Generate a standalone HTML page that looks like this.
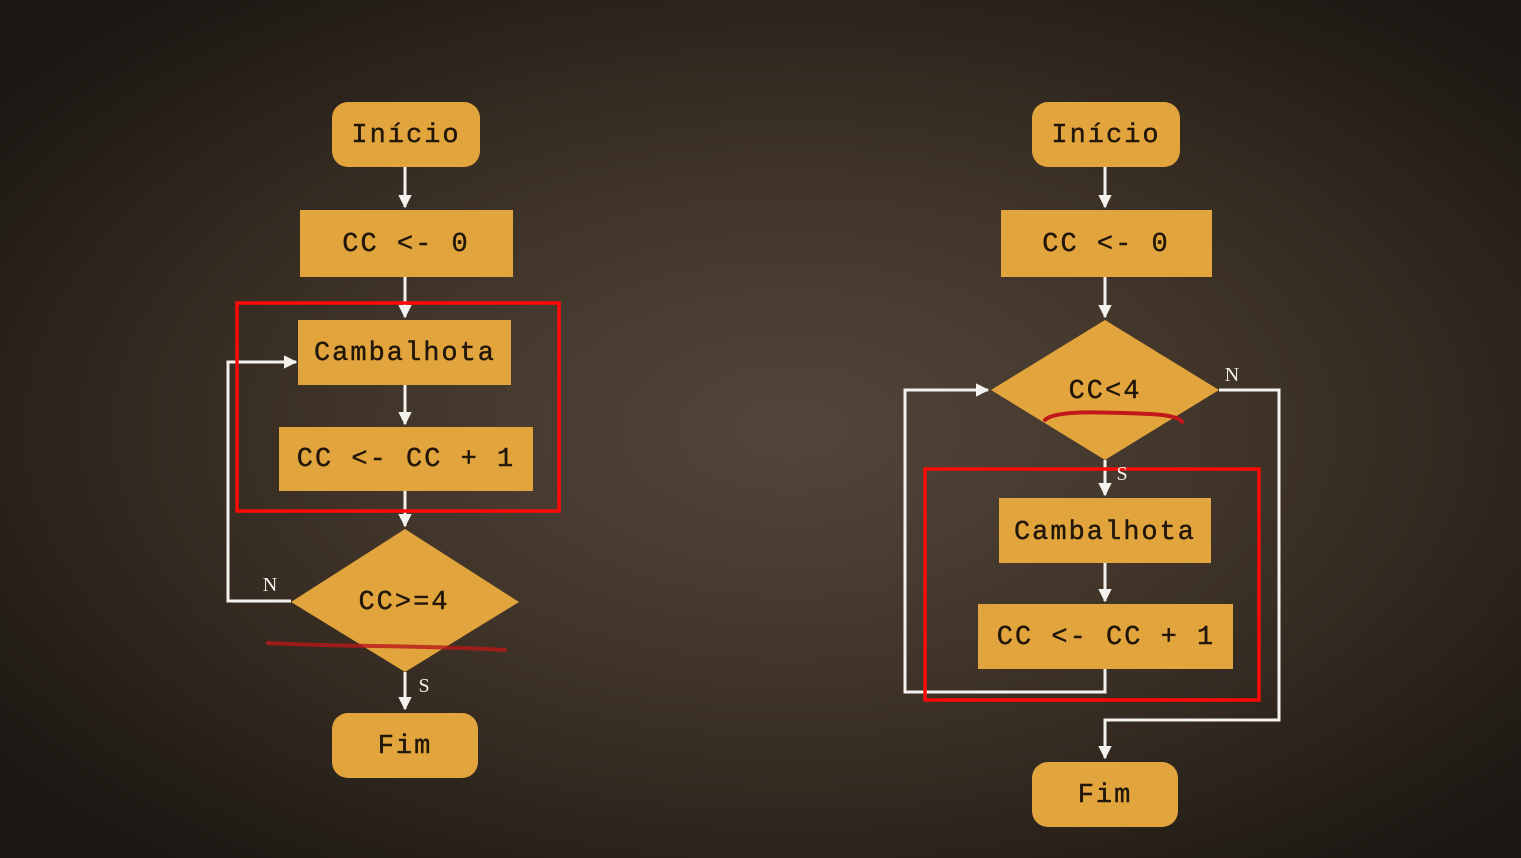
<!DOCTYPE html>
<html><head><meta charset="utf-8"><style>
html,body{margin:0;padding:0;width:1521px;height:858px;overflow:hidden;background:#2a2119}
svg{display:block}
text{font-family:"Liberation Mono",monospace;font-size:27px;letter-spacing:2px;fill:#20160a;stroke:#20160a;stroke-width:0.4;text-anchor:middle;dominant-baseline:central}
.lbl{font-family:"Liberation Serif",serif;font-size:20px;letter-spacing:0;fill:#f4f0ea;stroke:none}
</style></head><body>
<svg width="1521" height="858" viewBox="0 0 1521 858">
<defs>
<radialGradient id="bg" cx="0.52" cy="0.5" r="0.65">
<stop offset="0" stop-color="#54453a"/>
<stop offset="0.45" stop-color="#403428"/>
<stop offset="1" stop-color="#1c1713"/>
</radialGradient>
<marker id="ar" viewBox="0 0 10 10" refX="9" refY="5" markerWidth="4.5" markerHeight="4.5" orient="auto"><path d="M0 0L10 5L0 10z" fill="#f4f2ee"/></marker>
</defs>
<rect width="1521" height="858" fill="url(#bg)"/>
<g fill="#e2a43c">
<rect x="332" y="102" width="148" height="65" rx="16"/>
<rect x="300" y="210" width="213" height="67"/>
<rect x="298" y="320" width="213" height="65"/>
<rect x="279" y="427" width="254" height="64"/>
<polygon points="405,529 519,602 405,672 291,602"/>
<rect x="332" y="713" width="146" height="65" rx="16"/>
<rect x="1032" y="102" width="148" height="65" rx="16"/>
<rect x="1001" y="210" width="211" height="67"/>
<polygon points="1105,320 1219,390 1105,460 991,390"/>
<rect x="999" y="498" width="212" height="65"/>
<rect x="978" y="604" width="255" height="65"/>
<rect x="1032" y="762" width="146" height="65" rx="16"/>
</g>
<g stroke="#f4f2ee" stroke-width="3" fill="none">
<line x1="405" y1="167" x2="405" y2="207" marker-end="url(#ar)"/>
<line x1="405" y1="277" x2="405" y2="317" marker-end="url(#ar)"/>
<line x1="405" y1="385" x2="405" y2="424" marker-end="url(#ar)"/>
<line x1="405" y1="491" x2="405" y2="526" marker-end="url(#ar)"/>
<line x1="405" y1="672" x2="405" y2="709" marker-end="url(#ar)"/>
<polyline points="291,601 228,601 228,362 296,362" marker-end="url(#ar)"/>
<line x1="1105" y1="167" x2="1105" y2="207" marker-end="url(#ar)"/>
<line x1="1105" y1="277" x2="1105" y2="317" marker-end="url(#ar)"/>
<line x1="1105" y1="460" x2="1105" y2="495" marker-end="url(#ar)"/>
<line x1="1105" y1="563" x2="1105" y2="601" marker-end="url(#ar)"/>
<polyline points="1105,669 1105,692 905,692 905,390 988,390" marker-end="url(#ar)"/>
<polyline points="1219,390 1279,390 1279,720 1105,720 1105,758" marker-end="url(#ar)"/>
</g>
<g stroke="#ff0a0a" stroke-width="3.5" fill="none">
<rect x="237" y="303" width="322" height="208"/>
<rect x="925" y="469" width="334" height="231"/>
</g>
<path d="M268 643 C340 647 420 645 505 650" stroke="#b81818" stroke-width="4" fill="none" stroke-linecap="round" opacity="0.8"/>
<path d="M1045 420 C1055 410 1100 412 1150 414 C1170 415 1180 418 1182 422" stroke="#c0181a" stroke-width="4" fill="none" stroke-linecap="round"/>
<text x="406" y="136">Início</text>
<text x="406" y="245">CC &lt;- 0</text>
<text x="405" y="354">Cambalhota</text>
<text x="406" y="460">CC &lt;- CC + 1</text>
<text x="404" y="603">CC&gt;=4</text>
<text x="405" y="747">Fim</text>
<text x="1106" y="136">Início</text>
<text x="1106" y="245">CC &lt;- 0</text>
<text x="1105" y="392">CC&lt;4</text>
<text x="1105" y="533">Cambalhota</text>
<text x="1106" y="638">CC &lt;- CC + 1</text>
<text x="1105" y="796">Fim</text>
<text class="lbl" x="270" y="585">N</text>
<text class="lbl" x="424" y="686">S</text>
<text class="lbl" x="1232" y="375">N</text>
<text class="lbl" x="1122" y="474">S</text>
</svg>
</body></html>
